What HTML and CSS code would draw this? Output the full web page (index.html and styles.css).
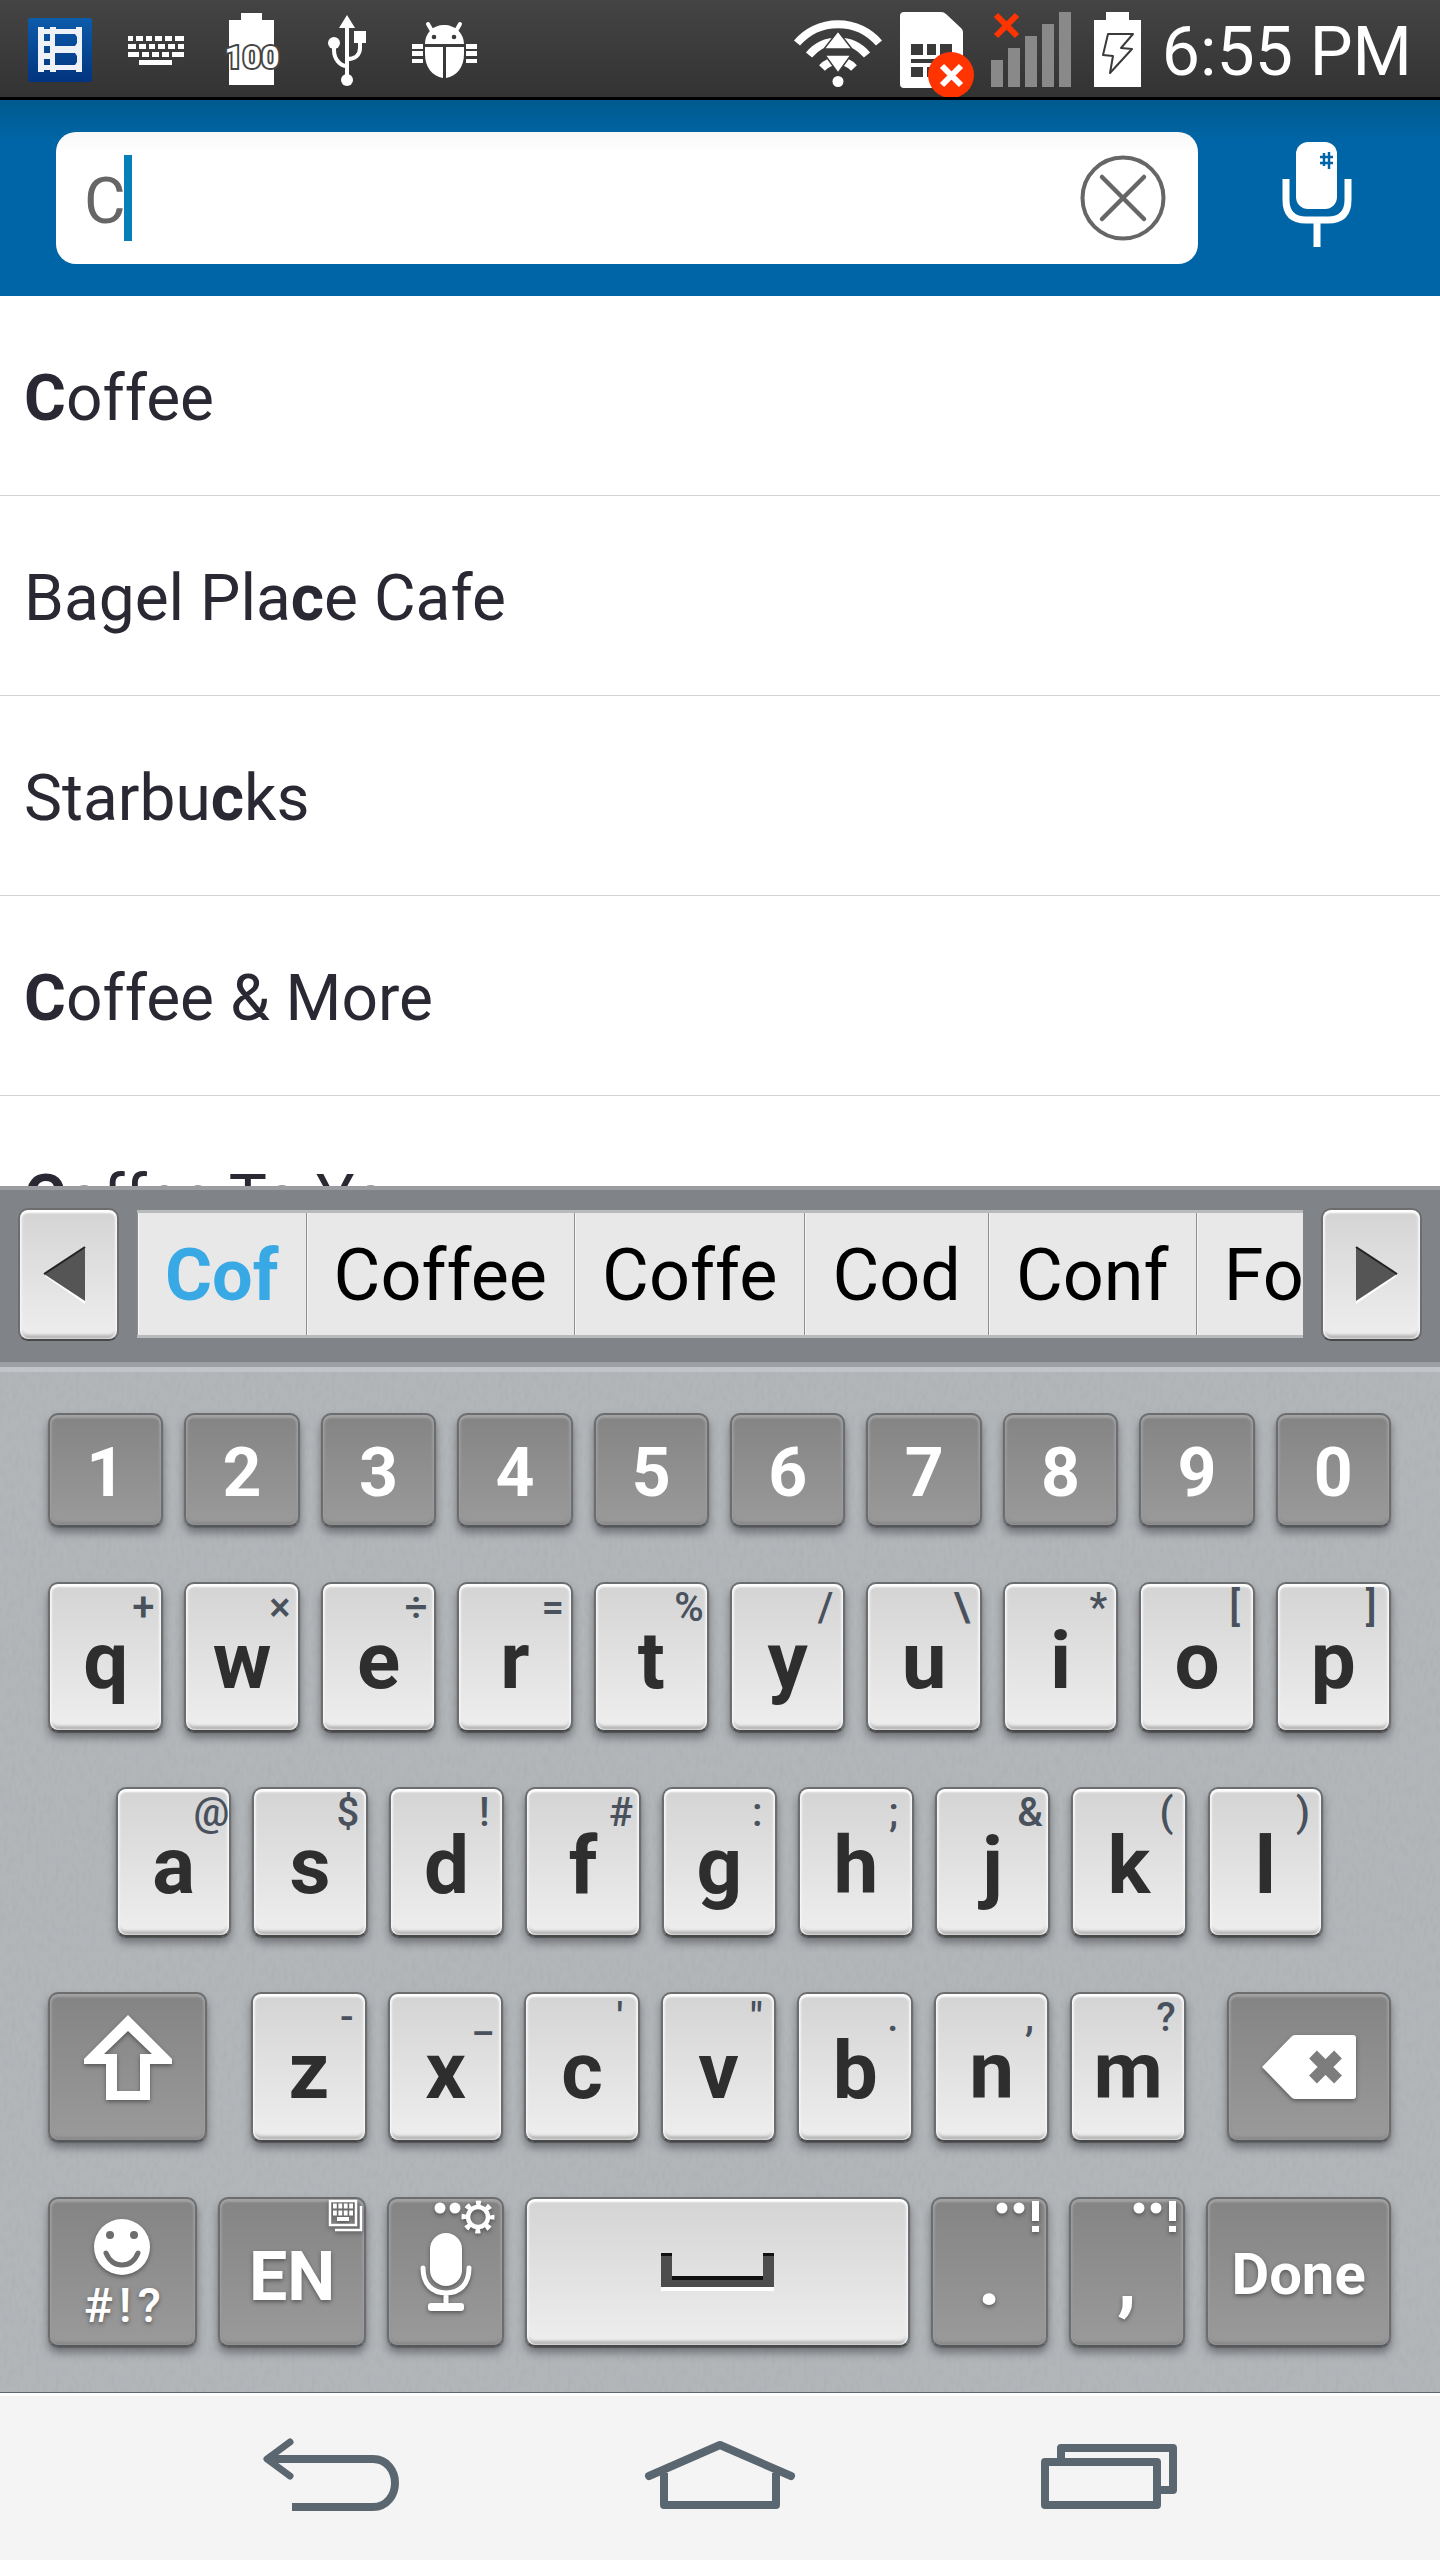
FILE: index.html
```html
<!DOCTYPE html>
<html lang="en">
<head>
<meta charset="utf-8">
<meta name="viewport" content="width=device-width, initial-scale=1">
<title>Search</title>
<link rel="stylesheet" href="styles.css">
</head>
<body>
<div class="phone">
  <header class="status">
    <svg class="status-icon" viewBox="0 0 96 97" aria-hidden="true">
      <defs><linearGradient id="film" x1="0" y1="0" x2="0" y2="1"><stop offset="0" stop-color="#0c5bab"/><stop offset="1" stop-color="#02347e"/></linearGradient></defs>
      <rect x="16" y="18" width="64" height="64" rx="2" fill="url(#film)"/>
      <path fill="#eef1f6" fill-rule="evenodd" d="M26 27h6v2h6v-2h6v2h20v-2h6v45h-6v-2H44v2h-6v-2h-6v2h-6zM32 34v7h6v-7zM32 46v7h6v-7zM32 59v6h6v-6zM43 34v12h20l2-3v-6l-2-3zM43 53v12h20l2-3v-6l-2-3z"/>
    </svg>
    <svg class="status-icon" viewBox="0 0 96 97" fill="#fff" aria-hidden="true">
      <path d="M20 36h5v5h-5zM28 36h7v5h-7zM38 36h6v5h-6zM47 36h7v5h-7zM57 36h7v5h-7zM67 36h9v5h-9zM20 44h8v5h-8zM31 44h7v5h-7zM41 44h6v5h-6zM50 44h7v5h-7zM60 44h7v5h-7zM70 44h6v5h-6zM20 52h11v5H20zM34 52h7v5h-7zM44 52h7v5h-7zM54 52h7v5h-7zM64 52h12v5H64zM31 60h33v5H31z"/>
    </svg>
    <svg class="status-icon" viewBox="0 0 96 97" fill="#fff" aria-hidden="true">
      <path d="M37 13h21v7h12v65H25V20h12z"/>
      <text class="battery-level" x="48" y="68">100</text>
    </svg>
    <svg class="status-icon" viewBox="0 0 96 97" fill="#fff" aria-hidden="true">
      <path d="M47 15l8 13h-6v48h-4V28h-6z"/><circle cx="47" cy="80" r="6"/><circle cx="34" cy="43" r="6"/><path d="M54 31h12v12H54z"/>
      <path d="M34 46v4c0 9 6 16 13 16M60 42v6c0 7-5 11-13 11" fill="none" stroke="#fff" stroke-width="4"/>
    </svg>
    <svg class="status-icon" viewBox="0 0 96 97" fill="#fff" aria-hidden="true">
      <path d="M29 44c0-11 8-19 19-19s20 8 20 19zM29 47h18v31c-11-2-18-11-18-24zM50 47h18v7c0 13-7 22-18 24z"/>
      <path d="M32 24l4 7M64 24l-4 7" stroke="#fff" stroke-width="4" stroke-linecap="round"/>
      <circle cx="38" cy="37" r="2.300" fill="#3b3b3b"/><circle cx="58" cy="37" r="2.300" fill="#3b3b3b"/>
      <path d="M16 44h11v5H16zM16 51h11v5H16zM16 59h11v4H16zM70 44h11v5H70zM70 51h11v5H70zM70 59h11v4H70z"/>
    </svg>
    <div class="status-right">
      <svg class="status-icon" viewBox="0 0 96 97" aria-hidden="true">
        <g fill="none" stroke="#fff" stroke-width="8"><path d="M7 43a54 54 0 0 1 82 0"/><path d="M19 55a38 38 0 0 1 58 0"/><path d="M32 68a22 22 0 0 1 32 0"/></g>
        <circle cx="48" cy="81.500" r="5.500" fill="#fff"/>
        <path d="M32 52h32" stroke="#3b3b3b" stroke-width="5"/>
        <path d="M48 31l14 18H34zM35 55h26L48 73z" fill="#fff" stroke="#3b3b3b" stroke-width="1.500"/>
      </svg>
      <svg class="status-icon" viewBox="0 0 96 97" aria-hidden="true">
        <path d="M18 12h37q3 0 5 2l15 14q2 2 2 4v52q0 4-4 4H18q-4 0-4-4V16q0-4 4-4z" fill="#fff"/>
        <path d="M25 44h12v11H25zM41 44h9v11h-9zM54 44h12v11H54zM25 59h41v4H25zM25 67h12v10H25zM41 67h9v10h-9z" fill="#3a3a3a"/>
        <circle cx="65" cy="75" r="23" fill="#ff3400"/>
        <path d="M56 66l19 19M75 66L56 85" stroke="#fff" stroke-width="6"/>
      </svg>
      <svg class="status-icon" viewBox="0 0 96 97" aria-hidden="true">
        <path d="M9 60h12v27H9zM26 48h12v39H26zM43 36h12v51H43zM60 24h12v63H60zM77 12h12v75H77z" fill="#898989"/>
        <path d="M14 15l21 21M35 15L14 36" stroke="#ff3400" stroke-width="6"/>
      </svg>
      <svg class="status-icon status-icon-narrow" viewBox="0 0 80 97" aria-hidden="true">
        <path d="M28 12h23v8h12v67H16V20h12z" fill="#fff"/>
        <path d="M30 34h25L43 48l11 1-22 24 3-17-10-1z" fill="#fff" stroke="#3a3a3a" stroke-width="2" stroke-linejoin="round"/>
      </svg>
      <time class="clock">6:55 PM</time>
    </div>
  </header>

  <form class="search">
    <div class="search-box">
      <input class="search-input" type="text" value="C" aria-label="Search">
      <span class="caret"></span>
      <button class="clear" type="button" aria-label="Clear">
        <svg width="86" height="86" viewBox="0 0 86 86" fill="none" stroke="#666"><circle cx="43" cy="43" r="40.500" stroke-width="4"/><path d="M22 22l42 42M64 22L22 64" stroke-width="4.500" stroke-linecap="round"/></svg>
      </button>
    </div>
    <button class="voice" type="button" aria-label="Voice search">
      <svg width="70" height="106" viewBox="0 0 70 106"><rect x="14" y="1" width="41" height="67" rx="12" fill="#fff"/><path d="M4 38v21q0 20 20 20h22q20 0 20-20V38M35 79v27" fill="none" stroke="#fff" stroke-width="7"/><path d="M42 12v13M47 11v17M38 16h13M38 22h13" stroke="#0065a6" stroke-width="2.500"/></svg>
    </button>
  </form>

  <ul class="results">
    <li><a class="result" href="#coffee"><b>C</b>offee</a></li>
    <li><a class="result" href="#bagel">Bagel Pla<b>c</b>e Cafe</a></li>
    <li><a class="result" href="#starbucks">Starbu<b>c</b>ks</a></li>
    <li><a class="result" href="#more"><b>C</b>offee &amp; More</a></li>
    <li><a class="result" href="#toyou"><b>C</b>offee To You</a></li>
  </ul>

  <div class="suggest">
    <button class="key light scroll scroll-back" type="button" aria-label="Previous words"><svg width="46" height="60" viewBox="0 0 46 60"><path d="M43 6v53L3 31z" fill="#fff"/><path d="M43 2v54L2 29z" fill="#555"/><path d="M43 2L2 29" stroke="#222" stroke-width="2"/></svg></button>
    <div class="words">
      <button class="word current" type="button">Cof</button>
      <button class="word" type="button">Coffee</button>
      <button class="word" type="button">Coffe</button>
      <button class="word" type="button">Cod</button>
      <button class="word" type="button">Conf</button>
      <button class="word" type="button">Fo</button>
    </div>
    <button class="key light scroll scroll-on" type="button" aria-label="Next words"><svg width="46" height="60" viewBox="0 0 46 60"><path d="M3 6v53l41-28z" fill="#fff"/><path d="M3 2v54l41-27z" fill="#555"/><path d="M3 2l41 27" stroke="#222" stroke-width="2"/></svg></button>
  </div>

  <div class="keyboard">
    <div class="row numbers">
      <button class="key dark" type="button">1</button><button class="key dark" type="button">2</button><button class="key dark" type="button">3</button><button class="key dark" type="button">4</button><button class="key dark" type="button">5</button><button class="key dark" type="button">6</button><button class="key dark" type="button">7</button><button class="key dark" type="button">8</button><button class="key dark" type="button">9</button><button class="key dark" type="button">0</button>
    </div>
    <div class="row">
      <button class="key light" type="button">q<span class="hint">+</span></button>
      <button class="key light" type="button">w<span class="hint">×</span></button>
      <button class="key light" type="button">e<span class="hint">÷</span></button>
      <button class="key light" type="button">r<span class="hint">=</span></button>
      <button class="key light" type="button">t<span class="hint">%</span></button>
      <button class="key light" type="button">y<span class="hint">/</span></button>
      <button class="key light" type="button">u<span class="hint">\</span></button>
      <button class="key light" type="button">i<span class="hint">*</span></button>
      <button class="key light" type="button">o<span class="hint">[</span></button>
      <button class="key light" type="button">p<span class="hint">]</span></button>
    </div>
    <div class="row home-row">
      <button class="key light" type="button">a<span class="hint">@</span></button>
      <button class="key light" type="button">s<span class="hint">$</span></button>
      <button class="key light" type="button">d<span class="hint">!</span></button>
      <button class="key light" type="button">f<span class="hint">#</span></button>
      <button class="key light" type="button">g<span class="hint">:</span></button>
      <button class="key light" type="button">h<span class="hint">;</span></button>
      <button class="key light" type="button">j<span class="hint">&amp;</span></button>
      <button class="key light" type="button">k<span class="hint">(</span></button>
      <button class="key light" type="button">l<span class="hint">)</span></button>
    </div>
    <div class="row shift-row">
      <button class="key dark shift" type="button" aria-label="Shift"><svg class="glyph" width="90" height="86" viewBox="0 0 90 86"><path fill="#fff" fill-rule="evenodd" d="M45 0l44 44v5H67v36H23V49H1v-5zM45 16L21 39h13v37h23V39h12z"/></svg></button>
      <button class="key light" type="button">z<span class="hint">-</span></button>
      <button class="key light" type="button">x<span class="hint">_</span></button>
      <button class="key light" type="button">c<span class="hint">'</span></button>
      <button class="key light" type="button">v<span class="hint">"</span></button>
      <button class="key light" type="button">b<span class="hint">.</span></button>
      <button class="key light" type="button">n<span class="hint">,</span></button>
      <button class="key light" type="button">m<span class="hint">?</span></button>
      <button class="key dark backspace" type="button" aria-label="Backspace"><svg class="glyph" width="94" height="64" viewBox="0 0 94 64"><path d="M0 32L29 2q2-2 4-2h58q3 0 3 3v58q0 3-3 3H33q-2 0-4-2z" fill="#fff"/><path d="M51 19l25 25M76 19L51 44" transform="translate(0 .5)" stroke="#7d7d7d" stroke-width="11"/></svg></button>
    </div>
    <div class="row bottom-row">
      <button class="key dark symbols" type="button">
        <svg class="glyph" width="58" height="58" viewBox="0 0 58 58" aria-hidden="true"><circle cx="29" cy="29" r="28" fill="#fff"/><circle cx="17" cy="17" r="4" fill="#6d6d6d"/><circle cx="41" cy="17" r="4" fill="#6d6d6d"/><path d="M13 35q5 12 16 12t16-12" fill="none" stroke="#6d6d6d" stroke-width="5" stroke-linecap="round"/></svg>
        <span class="symbols-label"><span>#</span><span>!</span><span>?</span></span>
      </button>
      <button class="key dark lang" type="button">EN<svg class="corner" width="36" height="34" viewBox="0 0 36 34" aria-hidden="true"><path d="M2 2h26v24H2zM33 7v24H7" fill="none" stroke="#fff" stroke-width="2.500"/><path d="M5 7h20M5 14h20" stroke="#fff" stroke-width="5" stroke-dasharray="3.800 1.600"/><path d="M9 18h12v4H9z" fill="#fff"/></svg></button>
      <button class="key dark" type="button" aria-label="Voice input">
        <svg class="glyph" width="54" height="80" viewBox="0 0 54 80"><rect x="11" y="1" width="32" height="53" rx="16" fill="#fff"/><path d="M4 36c0 16 9 25 23 25s23-9 23-25M27 61v12" fill="none" stroke="#fff" stroke-width="5" stroke-linecap="round"/><rect x="9" y="71" width="36" height="8" rx="3" fill="#fff"/></svg>
        <svg class="corner corner-gear" width="64" height="36" viewBox="0 0 64 36" aria-hidden="true"><circle cx="8" cy="9" r="5.500" fill="#fff"/><circle cx="23" cy="9" r="5.500" fill="#fff"/><circle cx="46" cy="18" r="10" fill="none" stroke="#fff" stroke-width="4.500"/><circle cx="46" cy="18" r="14" fill="none" stroke="#fff" stroke-width="5" stroke-dasharray="5 5.995" stroke-dashoffset="2.500"/></svg>
      </button>
      <button class="key light space" type="button" aria-label="Space"><svg width="113" height="38" viewBox="0 0 113 38"><path d="M0 4h11v23h91V4h11v34H0z" fill="#fff"/><path d="M0 0h11v23h91V0h11v34H0z" fill="#4d4d4d"/><path d="M0 0h11v3H0zM102 0h11v3h-11zM11 23h91v4H11z" fill="#111"/></svg></button>
      <button class="key dark punct" type="button">.<svg class="corner corner-mark" width="44" height="34" viewBox="0 0 44 34" aria-hidden="true"><g fill="#fff"><circle cx="6" cy="9" r="5.500"/><circle cx="23" cy="9" r="5.500"/><path d="M36 2h7v20h-7zM36 27h7v6h-7z"/></g></svg></button>
      <button class="key dark punct" type="button">,<svg class="corner corner-mark" width="44" height="34" viewBox="0 0 44 34" aria-hidden="true"><g fill="#fff"><circle cx="6" cy="9" r="5.500"/><circle cx="23" cy="9" r="5.500"/><path d="M36 2h7v20h-7zM36 27h7v6h-7z"/></g></svg></button>
      <button class="key dark done" type="button">Done</button>
    </div>
  </div>

  <nav class="nav">
    <button class="nav-button" type="button" aria-label="Back"><svg width="138" height="76" viewBox="0 0 138 76" fill="none" stroke="#5b6770" stroke-width="8"><path d="M8 22h103c14 0 22 12 22 24s-8 24-22 24H30"/><path d="M28 5L5 22l23 17" stroke-width="7" stroke-linecap="round" stroke-linejoin="round"/></svg></button>
    <button class="nav-button" type="button" aria-label="Home"><svg width="154" height="76" viewBox="0 0 154 76" fill="none" stroke="#5b6770" stroke-width="8" stroke-linejoin="round"><path d="M21 36v32h112V36"/><path d="M6 39L77 8l71 31" stroke-linecap="round"/></svg></button>
    <button class="nav-button" type="button" aria-label="Recent apps"><svg width="136" height="76" viewBox="0 0 136 76" fill="none" stroke="#5b6770" stroke-width="8" stroke-linejoin="round"><path d="M4 25h112v43H4z"/><path d="M20 25V11h112v42h-16"/></svg></button>
  </nav>
</div>
</body>
</html>
```
FILE: styles.css
```css
* { box-sizing: border-box; }

body {
  margin: 0;
  font-family: Roboto, "Liberation Sans", sans-serif;
  background: #fff;
}

button {
  margin: 0;
  padding: 0;
  border: 0;
  background: none;
  font: inherit;
  color: inherit;
}

svg { display: block; flex: none; }

.phone {
  display: flex;
  flex-direction: column;
  height: 100vh;
}

/* Status bar */
.status {
  display: flex;
  flex: none;
  height: 100px;
  padding: 0 28px 0 12px;
  border-bottom: 3px solid #000;
  background: linear-gradient(#444, #333);
  color: #fff;
}

.status-icon { width: 96px; height: 97px; }
.status-icon-narrow { width: 80px; }

.battery-level {
  font-size: 32px;
  font-weight: 700;
  text-anchor: middle;
  stroke: #444;
  stroke-width: 4px;
  paint-order: stroke;
}

.status-right { display: flex; margin-left: auto; }

.clock {
  margin-left: 4px;
  font-size: 68px;
  line-height: 104px;
  white-space: nowrap;
}

/* Search header */
.search {
  display: flex;
  flex: none;
  align-items: center;
  height: 196px;
  padding: 0 80px 0 56px;
  background: linear-gradient(#005a8e, #0065a6 40px);
}

.search-box {
  position: relative;
  display: flex;
  flex: 1;
  align-items: center;
  height: 132px;
  padding: 0 32px 0 28px;
  border-radius: 20px;
  background: linear-gradient(#f7f7f7, #fff 20px);
}

.search-input {
  flex: 1;
  min-width: 0;
  padding: 6px 0 0;
  border: 0;
  outline: 0;
  background: none;
  font: 64px Roboto, "Liberation Sans", sans-serif;
  color: #666;
}

.caret {
  position: absolute;
  top: 23px;
  left: 68px;
  width: 8px;
  height: 86px;
  background: #087fbb;
}

.voice { margin: 0 8px 8px 84px; }

/* Results */
.results {
  flex: 1;
  min-height: 0;
  margin: 0;
  padding: 0;
  overflow: hidden;
  list-style: none;
}

.result {
  display: block;
  padding: 6px 24px 0;
  border-bottom: 1px solid #d2d2d2;
  font-size: 64px;
  line-height: 193px;
  color: #2a2833;
  text-decoration: none;
}

/* Word suggestions */
.suggest {
  display: flex;
  flex: none;
  align-items: flex-start;
  justify-content: space-between;
  gap: 18px;
  height: 176px;
  padding: 18px;
  border-top: 4px solid #9a9ca0;
  background: #808387;
}

.words {
  display: flex;
  flex: 1;
  min-width: 0;
  height: 128px;
  margin-top: 2px;
  overflow: hidden;
  border-top: 3px solid #b9babb;
  border-bottom: 3px solid #b9babb;
  background: #e8e8e8;
}

.word {
  flex: none;
  padding: 3px 27px 0;
  border-left: 1px solid #8f8f8f;
  box-shadow: inset 1px 0 #f5f5f5;
  font-size: 72px;
  color: #000;
}

.current { font-weight: 700; color: #38a9e4; }

/* Keys */
.key {
  position: relative;
  display: flex;
  flex: 1 1 0;
  align-items: center;
  justify-content: center;
  min-width: 0;
  height: 150px;
  border: 2px solid #6c6d6f;
  border-radius: 10px;
  font-weight: 700;
}

.light {
  padding-top: 7px;
  border-bottom-color: #484848;
  background: linear-gradient(#d4d4d4, #eee);
  box-shadow: inset 0 3px 2px #fff, inset 2px 0 2px #f4f4f4, inset -2px 0 2px #f4f4f4, inset 0 -4px 3px #b4b4b4, 0 1px 1px #505254, 0 6px 8px rgba(60, 62, 68, .55);
  font-size: 80px;
  color: #2e2e2e;
}

.dark {
  border-bottom-color: #55575a;
  background: linear-gradient(#848484, #9a9a9a);
  box-shadow: inset 0 3px 2px #a2a2a2, inset 2px 0 2px #999, inset -2px 0 2px #999, inset 0 -3px 3px #888, 0 1px 1px #606265, 0 6px 8px rgba(60, 62, 68, .55);
  font-size: 68px;
  color: #fff;
}

.scroll {
  flex: 0 0 101px;
  height: 133px;
  padding: 0;
  box-shadow: inset 0 3px 2px #fff, inset 2px 0 2px #f4f4f4, inset -2px 0 2px #f4f4f4, inset 0 -4px 3px #b4b4b4;
}

.scroll-back { padding-right: 8px; }
.scroll-on { padding-left: 8px; }

.hint {
  position: absolute;
  top: 0;
  right: -2px;
  width: 40px;
  text-align: center;
  font-size: 40px;
  font-weight: 500;
  line-height: 48px;
  color: #48515c;
}

/* Keyboard */
.keyboard {
  display: flex;
  flex: none;
  flex-direction: column;
  gap: 55px;
  padding: 41px 49px 45px 48px;
  border-top: 5px solid #c1c4c8;
  box-shadow: 0 -5px #9d9fa2;
  margin-top: 5px;
  background-color: #b2b6b9;
  background-image: url("data:image/svg+xml,%3Csvg xmlns='http://www.w3.org/2000/svg' width='256' height='256'%3E%3Cfilter id='n' x='0' y='0' width='100%25' height='100%25'%3E%3CfeTurbulence type='fractalNoise' baseFrequency='.25 .1' numOctaves='2' stitchTiles='stitch'/%3E%3CfeColorMatrix values='0 0 0 0 .4 0 0 0 0 .41 0 0 0 0 .42 1 0 0 0 -.4'/%3E%3C/filter%3E%3Crect width='256' height='256' filter='url(%23n)'/%3E%3C/svg%3E");
}

.row { display: flex; gap: 21px; }

.numbers .key { height: 114px; padding-top: 6px; }

.home-row { padding: 0 68px; }

.shift-row .light { flex-grow: 115; }
.shift { flex-grow: 160; margin-right: 23px; padding-bottom: 18px; }
.backspace { flex-grow: 165; margin-left: 20px; }

.bottom-row .key { flex-grow: 115; }
.bottom-row .symbols { flex-grow: 148; flex-direction: column; gap: 4px; padding-top: 6px; }
.bottom-row .lang { flex-grow: 148; padding-top: 10px; }
.bottom-row .space { flex-grow: 390; padding-top: 0; }
.bottom-row .punct { padding-top: 12px; font-size: 80px; }
.bottom-row .done { flex-grow: 185; padding-top: 4px; font-size: 58px; }

.glyph,
.corner { filter: drop-shadow(0 2px 2px rgba(50, 50, 50, .6)); }

.lang,
.symbols,
.punct,
.done { text-shadow: 0 2px 4px rgba(50, 50, 50, .6); }

.symbols-label {
  display: flex;
  gap: 6px;
  font-size: 48px;
  font-weight: 500;
  line-height: 52px;
}

.corner {
  position: absolute;
  top: 0;
  right: 0;
}

.corner-gear,
.corner-mark { right: 6px; }

/* Navigation bar */
.nav {
  display: flex;
  flex: none;
  align-items: center;
  height: 168px;
  padding: 0 137px 4px;
  border-top: 1px solid #5a6872;
  box-shadow: inset 0 3px #fff;
  background: #f4f4f4;
}

.nav-button {
  display: flex;
  flex: 1;
  justify-content: center;
}
```
